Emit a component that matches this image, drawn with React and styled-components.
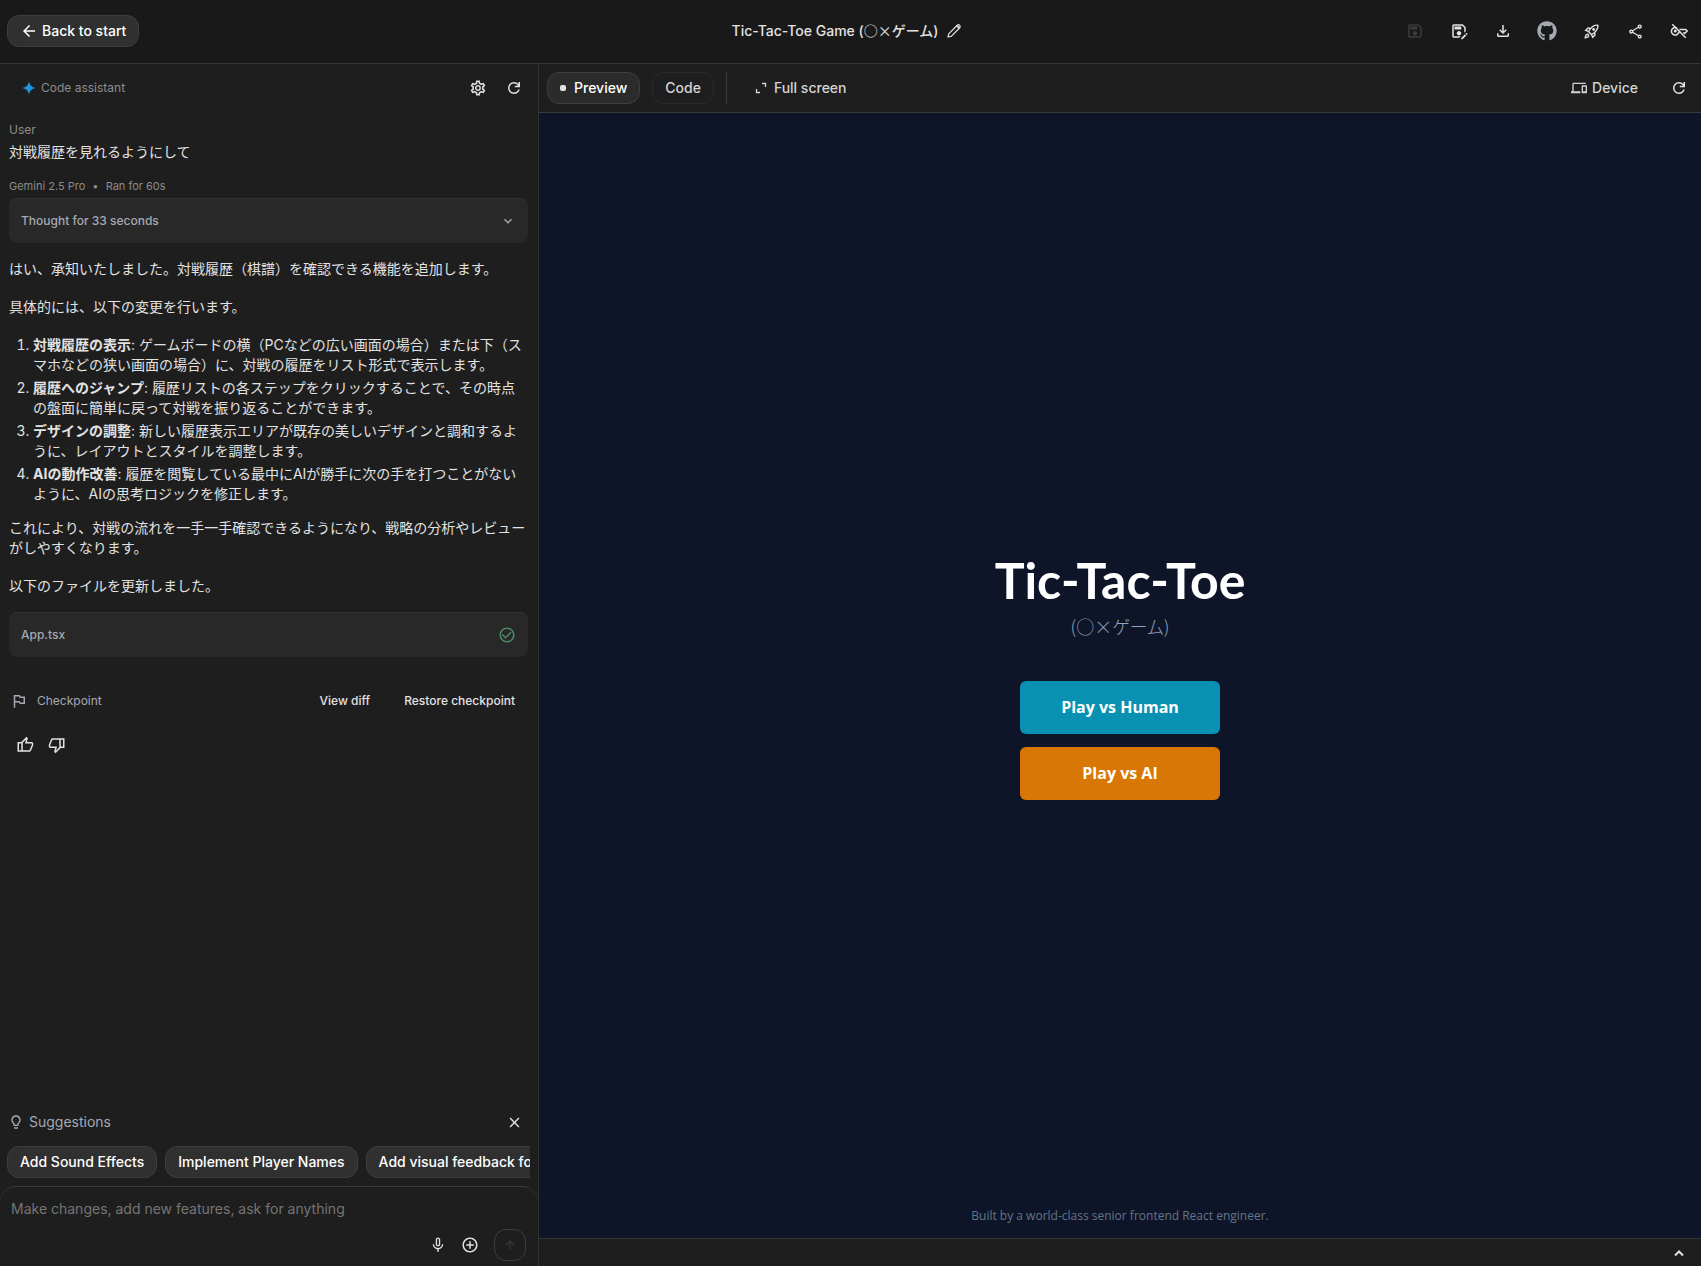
import React, { useState } from 'react';
import styled, { createGlobalStyle } from 'styled-components';
import {
  MdAddCircleOutline,
  MdArrowBack,
  MdArrowUpward,
  MdCheckCircleOutline,
  MdClose,
  MdExpandMore,
  MdMicNone,
  MdOutlineDevices,
  MdOutlineFileDownload,
  MdOutlineLightbulb,
  MdOutlineRocketLaunch,
  MdOutlineSave,
  MdOutlineSaveAs,
  MdOutlineSettings,
  MdOutlineShare,
  MdOutlinedFlag,
} from 'react-icons/md';
import { FaGithub } from 'react-icons/fa';

const steps = [
  {
    title: '対戦履歴の表示',
    text: 'ゲームボードの横（PCなどの広い画面の場合）または下（スマホなどの狭い画面の場合）に、対戦の履歴をリスト形式で表示します。',
  },
  {
    title: '履歴へのジャンプ',
    text: '履歴リストの各ステップをクリックすることで、その時点の盤面に簡単に戻って対戦を振り返ることができます。',
  },
  {
    title: 'デザインの調整',
    text: '新しい履歴表示エリアが既存の美しいデザインと調和するように、レイアウトとスタイルを調整します。',
  },
  {
    title: 'AIの動作改善',
    text: '履歴を閲覧している最中にAIが勝手に次の手を打つことがないように、AIの思考ロジックを修正します。',
  },
];

const suggestions = [
  'Add Sound Effects',
  'Implement Player Names',
  'Add visual feedback for winning line',
];

const RefreshIcon = () => (
  <svg width="18" height="18" viewBox="0 -960 960 960" fill="currentColor">
    <path d="M480-160q-134 0-227-93t-93-227q0-134 93-227t227-93q69 0 132 28.5T720-690v-110h80v280H520v-80h168q-32-56-87.5-88T480-720q-100 0-170 70t-70 170q0 100 70 170t170 70q77 0 139-44t87-116h84q-28 106-114 173t-196 67Z" />
  </svg>
);

const ThumbIcon = ({ down }) => (
  <svg width="18" height="18" viewBox="0 -960 960 960" fill="currentColor">
    <path
      transform={down ? 'rotate(180 480 -480)' : undefined}
      d="M720-120H280v-520l280-280 50 50q7 7 11.5 19t4.5 23v14l-44 174h258q32 0 56 24t24 56v80q0 7-2 15t-4 15L794-168q-9 20-30 34t-44 14Zm-360-80h360l120-280v-80H480l54-220-174 174v406Zm-80-440v80H160v360h120v80H80v-520h200Z"
    />
  </svg>
);

const PencilIcon = () => (
  <svg
    width="16"
    height="16"
    viewBox="0 0 16 16"
    fill="none"
    stroke="currentColor"
    strokeWidth="1.2"
    strokeLinejoin="round"
  >
    <path d="M2 14L2.700 10.800L11.500 2Q12.600 1.300 13.600 2.400Q14.600 3.400 14 4.500L5.200 13.300Z" />
    <path d="M10.800 2.700L13.300 5.200" strokeWidth="1.8" />
  </svg>
);

const KeyOffIcon = () => (
  <svg
    width="18"
    height="18"
    viewBox="0 0 24 24"
    fill="none"
    stroke="currentColor"
    strokeWidth="2"
  >
    <path d="M3 3l18 18" />
    <path d="M9.5 8.2A5 5 0 1 0 11.6 14H13" />
    <path d="M12.5 10H21l2 2-3.5 3.5-2-1.5" />
    <circle cx="7" cy="12" r="1" fill="currentColor" />
  </svg>
);

const SparkIcon = () => (
  <svg width="14" height="14" viewBox="0 0 14 14" fill="#1f95dc">
    <path d="M7 0.500C7.900 4.300 9.700 6.100 13.500 7C9.700 7.900 7.900 9.700 7 13.500C6.100 9.700 4.300 7.900 0.500 7C4.300 6.100 6.100 4.300 7 0.500Z" />
  </svg>
);

const FullScreenIcon = () => (
  <svg
    width="12"
    height="12"
    viewBox="0 0 12 12"
    fill="none"
    stroke="currentColor"
    strokeWidth="1.3"
  >
    <path d="M7 1.500h3.500V5M1.500 7v3.500H5" />
  </svg>
);

const ChevronUpIcon = () => (
  <svg
    width="12"
    height="12"
    viewBox="0 0 12 12"
    fill="none"
    stroke="currentColor"
    strokeWidth="2"
  >
    <path d="M2 8.500L6 4.500L10 8.500" />
  </svg>
);

const App = () => {
  const [tab, setTab] = useState('preview');
  const [prompt, setPrompt] = useState('');

  return (
    <Page>
      <GlobalStyle />
      <Header>
        <HeaderSide>
          <Pill>
            <MdArrowBack size={18} />
            Back to start
          </Pill>
        </HeaderSide>
        <HeaderTitle>
          <h1>
            Tic-Tac-Toe Game (<Marks>○×</Marks>ゲーム)
          </h1>
          <IconButton aria-label="Rename app">
            <PencilIcon />
          </IconButton>
        </HeaderTitle>
        <HeaderSide $end>
          <IconButton aria-label="Save" disabled>
            <MdOutlineSave size={18} />
          </IconButton>
          <IconButton aria-label="Save a copy">
            <MdOutlineSaveAs size={18} />
          </IconButton>
          <IconButton aria-label="Download">
            <MdOutlineFileDownload size={18} />
          </IconButton>
          <IconButton aria-label="GitHub" $muted>
            <FaGithub size={20} />
          </IconButton>
          <IconButton aria-label="Deploy">
            <MdOutlineRocketLaunch size={17} />
          </IconButton>
          <IconButton aria-label="Share">
            <MdOutlineShare size={17} />
          </IconButton>
          <IconButton aria-label="API key">
            <KeyOffIcon />
          </IconButton>
        </HeaderSide>
      </Header>

      <Main>
        <Assistant>
          <AssistantBar>
            <SparkIcon />
            <AssistantName>Code assistant</AssistantName>
            <IconButton aria-label="Settings">
              <MdOutlineSettings size={18} />
            </IconButton>
            <IconButton aria-label="Reset">
              <RefreshIcon />
            </IconButton>
          </AssistantBar>

          <Chat>
            <Meta>User</Meta>
            <UserText>対戦履歴を見れるようにして</UserText>
            <Meta $small>
              Gemini 2.5 Pro <Dot>•</Dot> Ran for 60s
            </Meta>
            <Card as="button">
              Thought for 33 seconds
              <MdExpandMore size={16} />
            </Card>
            <Answer>
              <p>はい、承知いたしました。対戦履歴（棋譜）を確認できる機能を追加します。</p>
              <p>具体的には、以下の変更を行います。</p>
              <ol>
                {steps.map(({ title, text }) => (
                  <li key={title}>
                    <strong>{title}</strong>: {text}
                  </li>
                ))}
              </ol>
              <p>
                これにより、対戦の流れを一手一手確認できるようになり、戦略の分析やレビューがしやすくなります。
              </p>
              <p>以下のファイルを更新しました。</p>
            </Answer>
            <Card>
              App.tsx
              <MdCheckCircleOutline size={18} color="#4b8a66" />
            </Card>
            <Checkpoint>
              <MdOutlinedFlag size={18} />
              <span>Checkpoint</span>
              <TextButton>View diff</TextButton>
              <TextButton>Restore checkpoint</TextButton>
            </Checkpoint>
            <Feedback>
              <IconButton aria-label="Good response">
                <ThumbIcon />
              </IconButton>
              <IconButton aria-label="Bad response">
                <ThumbIcon down />
              </IconButton>
            </Feedback>
          </Chat>

          <SuggestionsHead>
            <MdOutlineLightbulb size={16} />
            <h2>Suggestions</h2>
            <IconButton aria-label="Close suggestions">
              <MdClose size={17} />
            </IconButton>
          </SuggestionsHead>
          <Chips>
            {suggestions.map((item) => (
              <Pill key={item}>{item}</Pill>
            ))}
          </Chips>

          <Composer onSubmit={(e) => e.preventDefault()}>
            <PromptInput
              aria-label="Prompt"
              placeholder="Make changes, add new features, ask for anything"
              rows={1}
              value={prompt}
              onChange={(e) => setPrompt(e.target.value)}
            />
            <ComposerActions>
              <IconButton type="button" aria-label="Use microphone">
                <MdMicNone size={18} />
              </IconButton>
              <IconButton type="button" aria-label="Add file">
                <MdAddCircleOutline size={18} />
              </IconButton>
              <SendButton aria-label="Send" disabled={!prompt}>
                <MdArrowUpward size={14} />
              </SendButton>
            </ComposerActions>
          </Composer>
        </Assistant>

        <Workspace>
          <Toolbar>
            <Tab
              $active={tab === 'preview'}
              onClick={() => setTab('preview')}
            >
              Preview
            </Tab>
            <Tab $active={tab === 'code'} onClick={() => setTab('code')}>
              Code
            </Tab>
            <Divider />
            <ToolButton $push>
              <FullScreenIcon />
              Full screen
            </ToolButton>
            <ToolButton>
              <MdOutlineDevices size={16} />
              Device
            </ToolButton>
            <IconButton aria-label="Reload preview">
              <RefreshIcon />
            </IconButton>
          </Toolbar>

          <Preview>
            <Game>
              <GameTitle>Tic-Tac-Toe</GameTitle>
              <GameSubtitle>(○×ゲーム)</GameSubtitle>
              <PlayButton $color="#0891b2">Play vs Human</PlayButton>
              <PlayButton $color="#d97706">Play vs AI</PlayButton>
            </Game>
            <Credit>
              Built by a world-class senior frontend React engineer.
            </Credit>
          </Preview>

          <Console>
            <IconButton aria-label="Open console">
              <ChevronUpIcon />
            </IconButton>
          </Console>
        </Workspace>
      </Main>
    </Page>
  );
};

export default App;

const GlobalStyle = createGlobalStyle`
  * {
    box-sizing: border-box;
  }
  body {
    margin: 0;
    background: #1e1e1e;
    color: #e2e2e2;
    font-family: Inter, 'Noto Sans CJK JP', sans-serif;
    font-size: 14px;
    line-height: 20px;
  }
  h1, h2, p, ol {
    margin: 0;
    font-size: inherit;
    font-weight: inherit;
  }
  button, textarea {
    font: inherit;
    color: inherit;
  }
  button {
    display: flex;
    align-items: center;
    cursor: pointer;
  }
  svg {
    flex-shrink: 0;
  }
`;

const Page = styled.div`
  display: flex;
  flex-direction: column;
  height: 100vh;
`;

const Header = styled.header`
  display: flex;
  align-items: center;
  height: 64px;
  flex-shrink: 0;
  padding: 0 6px 1px 7px;
  background: #191919;
  border-bottom: 1px solid #333;
`;

const HeaderSide = styled.div`
  display: flex;
  flex: 1;
  gap: 12px;
  justify-content: ${({ $end }) => ($end ? 'flex-end' : 'flex-start')};
`;

const HeaderTitle = styled.div`
  display: flex;
  align-items: center;
  font-weight: 500;
`;

const Marks = styled.span`
  font-family: 'Noto Sans CJK JP', sans-serif;
  font-weight: 400;
  line-height: 1;
`;

const IconButton = styled.button`
  justify-content: center;
  width: 32px;
  height: 32px;
  padding: 0;
  border: none;
  background: none;
  color: ${({ $muted }) => ($muted ? '#a4a9b3' : '#e2e2e2')};

  &:disabled {
    color: #3c3c3c;
  }
`;

const Pill = styled.button`
  gap: 4px;
  height: 32px;
  flex-shrink: 0;
  padding: 0 12px;
  border: 1px solid #3e3e3e;
  border-radius: 12px;
  background: #303030;
  color: #fff;
  font-weight: 500;
  white-space: nowrap;
`;

const Main = styled.main`
  display: flex;
  flex: 1;
  min-height: 0;
`;

const Assistant = styled.aside`
  display: flex;
  flex-direction: column;
  width: 539px;
  flex-shrink: 0;
  border-right: 1px solid #333;
`;

const AssistantBar = styled.div`
  display: flex;
  align-items: center;
  height: 48px;
  padding: 0 8px 0 22px;
`;

const AssistantName = styled.span`
  flex: 1;
  margin-left: 5px;
  color: #8c8c8c;
  font-size: 12px;

  & + button {
    margin-right: 4px;
  }
`;

const Chat = styled.section`
  flex: 1;
  min-height: 0;
  padding: 8px 10px 0 9px;
`;

const Meta = styled.div`
  color: #8c8c8c;
  font-size: ${({ $small }) => ($small ? '11px' : '12px')};
`;

const Dot = styled.span`
  margin: 0 4px;
`;

const UserText = styled.p`
  margin: 2px 0 14px;
`;

const Card = styled.div`
  display: flex;
  align-items: center;
  justify-content: space-between;
  width: 100%;
  height: 45px;
  padding: 0 12px;
  border: none;
  border-top: 1px solid #313131;
  border-radius: 8px;
  background: #282828;
  color: #a4a9b3;
  font-size: 12px;
  font-weight: 500;
  margin-top: 2px;
`;

const Answer = styled.div`
  margin: 16px 0;

  p {
    margin-bottom: 18px;
  }
  p:last-child {
    margin-bottom: 0;
  }
  ol {
    margin-bottom: 14px;
    padding-left: 24px;
  }
  li + li {
    margin-top: 3px;
  }
  strong {
    font-weight: 700;
  }
`;

const Checkpoint = styled.div`
  display: flex;
  align-items: center;
  gap: 9px;
  height: 32px;
  margin-top: 28px;
  padding: 0 1px;
  color: #a4a9b3;
  font-size: 12px;

  span {
    flex: 1;
  }
`;

const TextButton = styled.button`
  height: 32px;
  padding: 0 12px;
  border: none;
  background: none;
  color: #e2e2e2;
  font-weight: 500;

  & + & {
    margin-left: 1px;
  }
`;

const Feedback = styled.div`
  display: flex;
  margin-top: 12px;
`;

const SuggestionsHead = styled.div`
  display: flex;
  align-items: center;
  gap: 5px;
  padding: 0 8px;
  color: #a4a9b3;

  h2 {
    flex: 1;
  }
`;

const Chips = styled.div`
  display: flex;
  gap: 8px;
  margin: 8px 8px 8px 7px;
  overflow: hidden;
`;

const Composer = styled.form`
  padding: 12px 12px 5px 11px;
  border-top: 1px solid #3a3a3a;
  border-radius: 16px 16px 0 0;
`;

const PromptInput = styled.textarea`
  display: block;
  width: 100%;
  height: 30px;
  padding: 0;
  border: none;
  outline: none;
  resize: none;
  background: none;

  &::placeholder {
    color: #757575;
  }
`;

const ComposerActions = styled.div`
  display: flex;
  justify-content: flex-end;
`;

const SendButton = styled(IconButton)`
  margin-left: 8px;
  border: 1px solid #3e3e3e;
  border-radius: 12px;
`;

const Workspace = styled.section`
  display: flex;
  flex: 1;
  flex-direction: column;
  min-width: 0;
`;

const Toolbar = styled.div`
  display: flex;
  align-items: center;
  height: 49px;
  flex-shrink: 0;
  padding: 0 6px 0 8px;
  border-bottom: 1px solid #3a3a3a;
`;

const Tab = styled(Pill)`
  margin-right: 12px;
  gap: 8px;
  background: ${({ $active }) => ($active ? '#2b2b2b' : 'transparent')};
  border-color: ${({ $active }) => ($active ? '#3e3e3e' : '#2a2a2a')};
  color: ${({ $active }) => ($active ? '#fff' : '#d4d4d4')};

  &::before {
    content: '';
    display: ${({ $active }) => ($active ? 'block' : 'none')};
    width: 6px;
    height: 6px;
    border-radius: 2px;
    background: #e2e2e2;
  }
`;

const Divider = styled.span`
  width: 1px;
  height: 32px;
  background: #3a3a3a;
`;

const ToolButton = styled.button`
  gap: ${({ $push }) => ($push ? '7px' : '5px')};
  height: 32px;
  margin-left: 16px;
  margin-right: ${({ $push }) => ($push ? 'auto' : '12px')};
  padding: 0 13px 0 12px;
  border: none;
  background: none;
  color: #d4d4d4;
  font-weight: 500;
`;

const Preview = styled.div`
  display: grid;
  place-items: center;
  grid-template-rows: 1fr;
  flex: 1;
  background: #0f1528;
  font-family: 'Open Sans', 'Noto Sans CJK JP', sans-serif;

  & > * {
    grid-area: 1 / 1;
  }
`;

const Game = styled.div`
  display: flex;
  flex-direction: column;
  align-items: center;
`;

const GameTitle = styled.h2`
  color: #fff;
  font-family: Lato, sans-serif;
  font-size: 50px;
  font-weight: 700;
  line-height: 56px;
`;

const GameSubtitle = styled.p`
  margin: 4px 0 28px;
  color: #94a3b8;
  font-family: 'Noto Sans CJK JP', sans-serif;
  font-feature-settings: 'palt';
  font-size: 18px;
  font-weight: 300;
  line-height: 28px;
`;

const PlayButton = styled.button`
  justify-content: center;
  width: 200px;
  height: 53px;
  margin-top: 13px;
  border: none;
  border-radius: 6px;
  background: ${({ $color }) => $color};
  color: #fff;
  font-size: 16px;
  font-weight: 700;
`;

const Credit = styled.p`
  align-self: end;
  margin-bottom: 12px;
  color: #64748b;
  font-size: 12px;
`;

const Console = styled.div`
  display: flex;
  align-items: center;
  justify-content: flex-end;
  height: 28px;
  flex-shrink: 0;
  padding: 0 6px;
  border-top: 1px solid #333;
`;
